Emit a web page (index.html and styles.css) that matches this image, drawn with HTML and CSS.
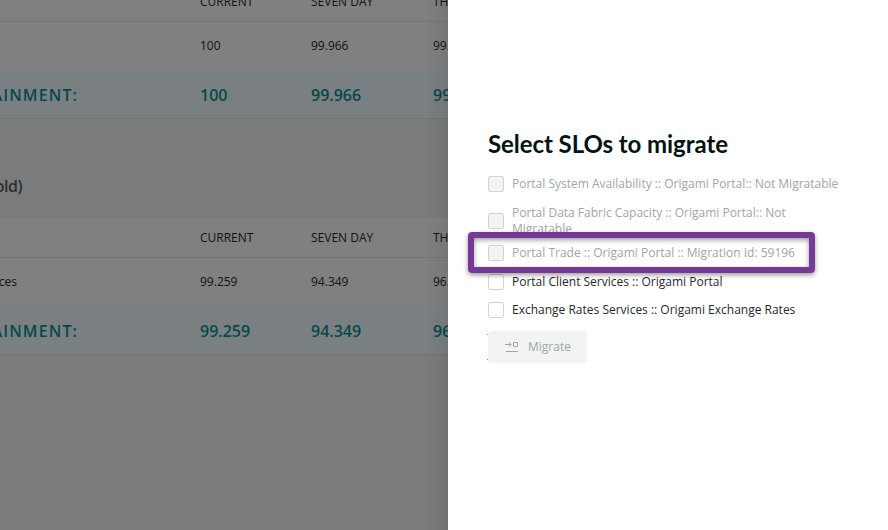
FILE: index.html
```html
<!DOCTYPE html>
<html lang="en">
<head>
<meta charset="utf-8">
<title>Migrate SLOs</title>
<link rel="stylesheet" href="styles.css">
</head>
<body>
<div class="app">
  <main class="report">
    <section class="table">
      <div class="row head"><span></span><span>CURRENT</span><span>SEVEN DAY</span><span>THIRTY DAY</span></div>
      <div class="row"><span></span><span>100</span><span>99.966</span><span>99.966</span></div>
      <div class="row total"><span class="label"><b>ATTAINMENT:</b></span><span>100</span><span>99.966</span><span>99.966</span></div>
    </section>
    <h2 class="group"><span>(Threshold)</span></h2>
    <section class="table">
      <div class="row head"><span></span><span>CURRENT</span><span>SEVEN DAY</span><span>THIRTY DAY</span></div>
      <div class="row"><span class="name"><b>Services</b></span><span>99.259</span><span>94.349</span><span>96.349</span></div>
      <div class="row total"><span class="label"><b>ATTAINMENT:</b></span><span>99.259</span><span>94.349</span><span>96.349</span></div>
    </section>
  </main>
  <aside class="drawer">
    <h1>Select SLOs to migrate</h1>
    <div class="options">
      <label class="option disabled"><i class="box"></i><span>Portal System Availability :: Origami Portal:: Not Migratable</span></label>
      <label class="option disabled wrapped"><i class="box"></i><span>Portal Data Fabric Capacity :: Origami Portal:: Not Migratable</span></label>
      <label class="option disabled marked"><i class="box"></i><span>Portal Trade :: Origami Portal :: Migration Id: 59196</span></label>
      <label class="option"><i class="box"></i><span>Portal Client Services :: Origami Portal</span></label>
      <label class="option"><i class="box"></i><span>Exchange Rates Services :: Origami Exchange Rates</span></label>
    </div>
    <button class="migrate" disabled>
      <svg width="16" height="16" viewBox="0 0 16 16" fill="none" stroke="currentColor"><path d="M1 5.500H7M4.800 3.200L7.100 5.500L4.800 7.800M9.500 3.500H13.500V7.500H9.500ZM2 12.500H14"/></svg>
      <span>Migrate</span>
    </button>
  </aside>
</div>
</body>
</html>
```
FILE: styles.css
```css
*, *::before, *::after { box-sizing: border-box; }
body { margin: 0; font: 12px/16px "Open Sans", sans-serif; }
.app { display: flex; width: 888px; height: 530px; overflow: hidden; background: #fff; }
.report {
  width: 448px; height: 530px; overflow: hidden; background: #797c7b; color: #101313;
  position: relative;
}
.report::after {
  content: ""; position: absolute; top: 0; right: 0; width: 24px; height: 100%;
  background: linear-gradient(to right, rgba(0,0,0,0), rgba(0,0,0,.07));
}
.table { background: #808080; width: 560px; }
.table:first-child { margin-top: -18px; }
.row {
  display: grid; grid-template-columns: 200px 111px 122px 127px; align-items: center;
  height: 49px; border-bottom: 1px solid #788081;
}
.head { height: 40px; border-bottom: 1px solid #737676; }
.total {
  height: 48px; background: #7a8081; border-bottom: 1px solid #707474;
  color: #06484c; font-size: 16px; font-weight: 600;
}
.label, .name { display: flex; justify-content: flex-end; }
.label b, .name b { font-weight: inherit; }
.label { padding-right: 122px; letter-spacing: 1.1px; }
.name { padding-right: 183px; white-space: nowrap; }
.group {
  display: flex; justify-content: flex-end; align-items: center; width: 22px; height: 99px;
  margin: 0; padding-top: 35px; font-size: 16px; line-height: 24px; font-weight: 600; letter-spacing: -.5px; color: #2b2f2f;
}
.drawer { width: 440px; padding: 128px 40px 0; color: #1d2b2b; }
h1 { margin: 0; font: 700 24px/32px Lato, sans-serif; letter-spacing: -.07px; color: #021414; }
.options { padding-top: 16px; }
.option { display: flex; align-items: center; gap: 8px; width: 360px; margin-bottom: 13px; }
.box { flex: none; width: 16px; height: 16px; border: 1px solid #d0d4d3; border-radius: 2px; background: #fff; }
.disabled { color: #a0a6a5; }
.disabled .box { background: #f2f4f4; }
.wrapped { width: 330px; margin-bottom: 8px; }
.marked { position: relative; }
.marked::after {
  content: ""; position: absolute; left: -20px; top: -13px; width: 347px; height: 41px;
  border: 6px solid #763997; border-radius: 4px;
  box-shadow: 0 2px 5px rgba(0,0,0,.4), inset 0 2px 5px rgba(0,0,0,.4);
}
.option:nth-child(4) { margin-bottom: 12px; }
.migrate {
  position: relative;
  display: flex; align-items: center; gap: 8px; width: 99px; height: 32px; padding: 0 16px;
  border: 0; border-radius: 4px; background: #f2f4f4; color: #a0a6a5; font: inherit;
}
.migrate::before, .migrate::after {
  content: ""; position: absolute; left: -1px; width: 1px; height: 1px; background: #7ba3a3;
}
.migrate::before { top: 3px; }
.migrate::after { bottom: 3px; }
```
